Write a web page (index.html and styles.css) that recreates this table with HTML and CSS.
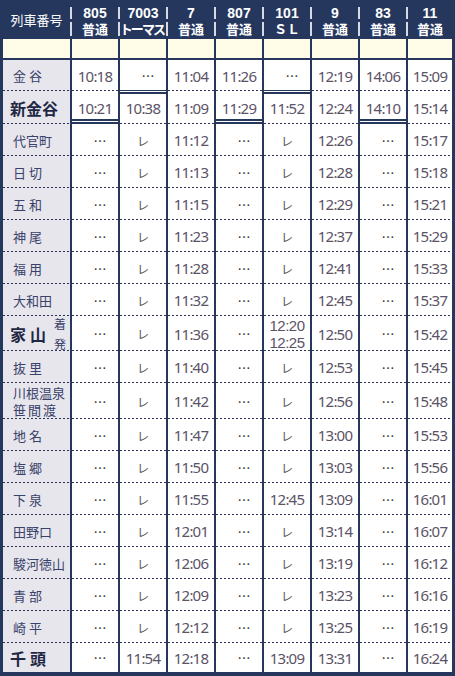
FILE: index.html
```html
<!DOCTYPE html>
<html lang="ja">
<head>
<meta charset="utf-8">
<link rel="stylesheet" href="styles.css">
</head>
<body>
<div class="tt">
  <div class="hc hfirst">列車番号</div>
  <div class="hc"><span class="hl">805</span><span class="hl sub">普通</span></div>
  <div class="hc"><span class="hl">7003</span><span class="hl sub kana">トーマス</span></div>
  <div class="hc"><span class="hl">7</span><span class="hl sub">普通</span></div>
  <div class="hc"><span class="hl">807</span><span class="hl sub">普通</span></div>
  <div class="hc"><span class="hl">101</span><span class="hl sub">ＳＬ</span></div>
  <div class="hc"><span class="hl">9</span><span class="hl sub">普通</span></div>
  <div class="hc"><span class="hl">83</span><span class="hl sub">普通</span></div>
  <div class="hc"><span class="hl">11</span><span class="hl sub">普通</span></div>

  <div class="yc"></div><div class="yc"></div><div class="yc"></div><div class="yc"></div><div class="yc"></div><div class="yc"></div><div class="yc"></div><div class="yc"></div><div class="yc"></div>

  <div class="c st sp3">金谷</div>
  <div class="c t">10:18</div><div class="c d sb">…</div><div class="c t">11:04</div><div class="c t">11:26</div><div class="c d sb">…</div><div class="c t">12:19</div><div class="c t">14:06</div><div class="c t">15:09</div>

  <div class="c st stb">新金谷</div>
  <div class="c t db">10:21</div><div class="c t dt">10:38</div><div class="c t">11:09</div><div class="c t db">11:29</div><div class="c t dt">11:52</div><div class="c t">12:24</div><div class="c t db">14:10</div><div class="c t">15:14</div>

  <div class="c st">代官町</div>
  <div class="c d">…</div><div class="c r">レ</div><div class="c t">11:12</div><div class="c d">…</div><div class="c r">レ</div><div class="c t">12:26</div><div class="c d">…</div><div class="c t">15:17</div>

  <div class="c st sp3">日切</div>
  <div class="c d">…</div><div class="c r">レ</div><div class="c t">11:13</div><div class="c d">…</div><div class="c r">レ</div><div class="c t">12:28</div><div class="c d">…</div><div class="c t">15:18</div>

  <div class="c st sp3">五和</div>
  <div class="c d">…</div><div class="c r">レ</div><div class="c t">11:15</div><div class="c d">…</div><div class="c r">レ</div><div class="c t">12:29</div><div class="c d">…</div><div class="c t">15:21</div>

  <div class="c st sp3">神尾</div>
  <div class="c d">…</div><div class="c r">レ</div><div class="c t">11:23</div><div class="c d">…</div><div class="c r">レ</div><div class="c t">12:37</div><div class="c d">…</div><div class="c t">15:29</div>

  <div class="c st sp3">福用</div>
  <div class="c d">…</div><div class="c r">レ</div><div class="c t">11:28</div><div class="c d">…</div><div class="c r">レ</div><div class="c t">12:41</div><div class="c d">…</div><div class="c t">15:33</div>

  <div class="c st">大和田</div>
  <div class="c d">…</div><div class="c r">レ</div><div class="c t">11:32</div><div class="c d">…</div><div class="c r">レ</div><div class="c t">12:45</div><div class="c d">…</div><div class="c t">15:37</div>

  <div class="c st stb ie"><span class="sp4">家山</span><span class="ad"><span>着</span><span>発</span></span></div>
  <div class="c d">…</div><div class="c r">レ</div><div class="c t">11:36</div><div class="c d">…</div><div class="c t t2"><span>12:20</span><span>12:25</span></div><div class="c t">12:50</div><div class="c d">…</div><div class="c t">15:42</div>

  <div class="c st sp3">抜里</div>
  <div class="c d">…</div><div class="c r">レ</div><div class="c t">11:40</div><div class="c d">…</div><div class="c r">レ</div><div class="c t">12:53</div><div class="c d">…</div><div class="c t">15:45</div>

  <div class="c st two"><span>川根温泉</span><span class="sp2">笹間渡</span></div>
  <div class="c d">…</div><div class="c r">レ</div><div class="c t">11:42</div><div class="c d">…</div><div class="c r">レ</div><div class="c t">12:56</div><div class="c d">…</div><div class="c t">15:48</div>

  <div class="c st sp3">地名</div>
  <div class="c d">…</div><div class="c r">レ</div><div class="c t">11:47</div><div class="c d">…</div><div class="c r">レ</div><div class="c t">13:00</div><div class="c d">…</div><div class="c t">15:53</div>

  <div class="c st sp3">塩郷</div>
  <div class="c d">…</div><div class="c r">レ</div><div class="c t">11:50</div><div class="c d">…</div><div class="c r">レ</div><div class="c t">13:03</div><div class="c d">…</div><div class="c t">15:56</div>

  <div class="c st sp3">下泉</div>
  <div class="c d">…</div><div class="c r">レ</div><div class="c t">11:55</div><div class="c d">…</div><div class="c t">12:45</div><div class="c t">13:09</div><div class="c d">…</div><div class="c t">16:01</div>

  <div class="c st">田野口</div>
  <div class="c d">…</div><div class="c r">レ</div><div class="c t">12:01</div><div class="c d">…</div><div class="c r">レ</div><div class="c t">13:14</div><div class="c d">…</div><div class="c t">16:07</div>

  <div class="c st">駿河徳山</div>
  <div class="c d">…</div><div class="c r">レ</div><div class="c t">12:06</div><div class="c d">…</div><div class="c r">レ</div><div class="c t">13:19</div><div class="c d">…</div><div class="c t">16:12</div>

  <div class="c st sp3">青部</div>
  <div class="c d">…</div><div class="c r">レ</div><div class="c t">12:09</div><div class="c d">…</div><div class="c r">レ</div><div class="c t">13:23</div><div class="c d">…</div><div class="c t">16:16</div>

  <div class="c st sp3">崎平</div>
  <div class="c d">…</div><div class="c r">レ</div><div class="c t">12:12</div><div class="c d">…</div><div class="c r">レ</div><div class="c t">13:25</div><div class="c d">…</div><div class="c t">16:19</div>

  <div class="c st stb last"><span class="sp4">千頭</span></div>
  <div class="c d last">…</div><div class="c t last">11:54</div><div class="c t last">12:18</div><div class="c d last">…</div><div class="c t last">13:09</div><div class="c t last">13:31</div><div class="c d last">…</div><div class="c t last">16:24</div>
</div>
</body>
</html>
```

FILE: styles.css
```css
html, body {
  margin: 0;
  padding: 0;
  background: #ffffff;
}

.tt {
  display: grid;
  width: 455px;
  box-sizing: border-box;
  padding: 0 3px 4px 3px;
  background: #26375e;
  grid-template-columns: 67px repeat(7, 46px) 44px;
  column-gap: 2px;
  grid-template-rows: 39px 21px 31px 33px repeat(6, 32px) 35px 32px 36px repeat(7, 32px) 29px;
  font-family: "Noto Sans CJK JP", sans-serif;
}

/* header */
.hc {
  margin-left: -2px;
  display: flex;
  flex-direction: column;
  padding-top: 7px;
  gap: 3px;
  color: #ffffff;
  font-weight: bold;
  font-family: "Liberation Sans", "Noto Sans CJK JP", sans-serif;
}

.hfirst {
  margin-left: 0;
  padding-top: 0;
  align-items: center;
  justify-content: center;
  font-weight: normal;
  font-size: 13px;
  font-family: "Noto Sans CJK JP", sans-serif;
}

.hl {
  display: block;
  border-left: 2px solid #d7dae2;
  height: 12px;
  line-height: 12px;
  font-size: 14px;
  text-align: center;
  white-space: nowrap;
}

.hl.sub {
  height: 13px;
  line-height: 13px;
  font-size: 13px;
  padding-top: 1px;
}

.hl.kana {
  font-feature-settings: "palt";
  letter-spacing: -1px;
}

/* yellow spacer row */
.yc {
  background: #fffde8;
  height: 19px;
  align-self: start;
}

/* data cells */
.c {
  background-color: #ffffff;
  background-image: linear-gradient(to right, #2b3452 50%, transparent 50%);
  background-size: 4px 1px;
  background-repeat: repeat-x;
  background-position: left bottom;
  display: flex;
  align-items: center;
  justify-content: center;
  white-space: nowrap;
}

.c.last {
  background-image: none;
}

.st {
  background-color: #e6e6ec;
  justify-content: flex-start;
  padding-left: 10px;
  color: #3a416a;
  font-size: 13px;
}

.st.stb {
  padding-left: 7px;
  font-size: 16px;
  font-weight: bold;
  color: #1f2744;
}

.sp3 { letter-spacing: 3px; }
.sp2 { letter-spacing: 2px; }
.sp4 { letter-spacing: 4px; }

.st.ie {
  justify-content: space-between;
  padding-right: 4px;
}

.ad {
  display: flex;
  flex-direction: column;
  font-size: 12px;
  font-weight: normal;
  line-height: 20px;
  color: #3a416a;
}

.st.two {
  flex-direction: column;
  align-items: flex-start;
  justify-content: center;
  line-height: 17.5px;
}

.t {
  font-family: "Noto Sans", sans-serif;
  font-size: 15px;
  letter-spacing: -0.8px;
  color: #5b5366;
}

.t2 {
  flex-direction: column;
  line-height: 17px;
  font-family: "Liberation Sans", sans-serif;
  letter-spacing: -0.5px;
}

.d {
  padding-left: 10px;
  color: #333333;
  font-size: 13px;
}

.r {
  font-size: 12px;
  color: #555555;
}

/* start / end markers */
.sb {
  background-image: linear-gradient(#26375e, #26375e);
  background-size: 100% 1px;
}

.db {
  box-shadow: inset 0 -2px 0 #26375e, inset 0 -3px 0 #ffffff, inset 0 -5px 0 #26375e;
}

.dt {
  box-shadow: inset 0 1px 0 #ffffff, inset 0 3px 0 #26375e;
}
```
